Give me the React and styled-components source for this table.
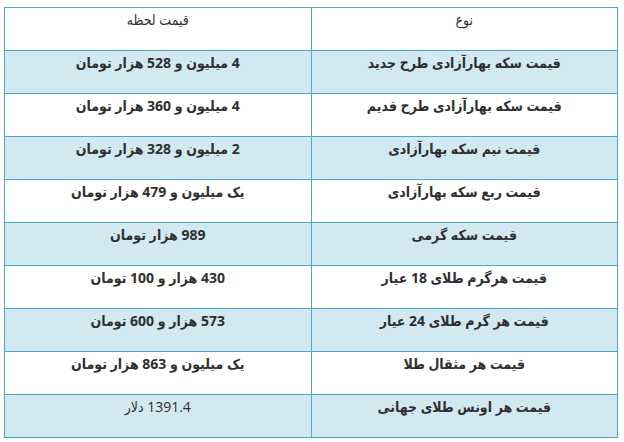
import React from 'react';
import styled, { createGlobalStyle } from 'styled-components';

const rows = [
    { type: 'قیمت سکه بهارآزادی طرح جدید', price: '4 میلیون و 528 هزار تومان' },
    { type: 'قیمت سکه بهارآزادی طرح قدیم', price: '4 میلیون و 360 هزار تومان' },
    { type: 'قیمت نیم سکه بهارآزادی', price: '2 میلیون و 328 هزار تومان' },
    { type: 'قیمت ربع سکه بهارآزادی', price: 'یک میلیون و 479 هزار تومان' },
    { type: 'قیمت سکه گرمی', price: '989 هزار تومان' },
    { type: 'قیمت هرگرم طلای 18 عیار', price: '430 هزار و 100 تومان' },
    { type: 'قیمت هر گرم طلای 24 عیار', price: '573 هزار و 600 تومان' },
    { type: 'قیمت هر مثقال طلا', price: 'یک میلیون و 863 هزار تومان' },
    { type: 'قیمت هر اونس طلای جهانی', price: '1391.4 دلار', light: true },
];

const App = () => {
    return (
        <>
            <GlobalStyle />
            <Wrapper>
                <Table dir="rtl">
                    <colgroup>
                        <col style={{ width: '50%' }} />
                        <col style={{ width: '50%' }} />
                    </colgroup>
                    <tbody>
                        <Row>
                            <Cell $head>نوع</Cell>
                            <Cell $head>قیمت لحظه</Cell>
                        </Row>
                        {rows.map((item, i) => (
                            <Row key={i} $striped={i % 2 === 0}>
                                <Cell>{item.type}</Cell>
                                <Cell $light={item.light}>{item.price}</Cell>
                            </Row>
                        ))}
                    </tbody>
                </Table>
            </Wrapper>
        </>
    );
};

export default App;

const GlobalStyle = createGlobalStyle`
    body {
        margin: 0;
        background: #ffffff;
        font-family: "Open Sans", "DejaVu Sans Condensed", "DejaVu Sans", sans-serif;
    }
`;

const Wrapper = styled.div`
    padding: 7px 6px 0 4px;
`;

const Table = styled.table`
    width: 614px;
    border-collapse: collapse;
    table-layout: fixed;
`;

const Row = styled.tr`
    height: 43px;
    background-color: ${p => (p.$striped ? '#d2e9f2' : '#ffffff')};
`;

const Cell = styled.td`
    border: 1px solid #4ba8c6;
    padding: 2px 8px 0;
    vertical-align: top;
    text-align: center;
    color: #2f2f2f;
    font-size: 14px;
    line-height: 20px;
    font-weight: ${p => (p.$head || p.$light ? 'normal' : 'bold')};
`;
